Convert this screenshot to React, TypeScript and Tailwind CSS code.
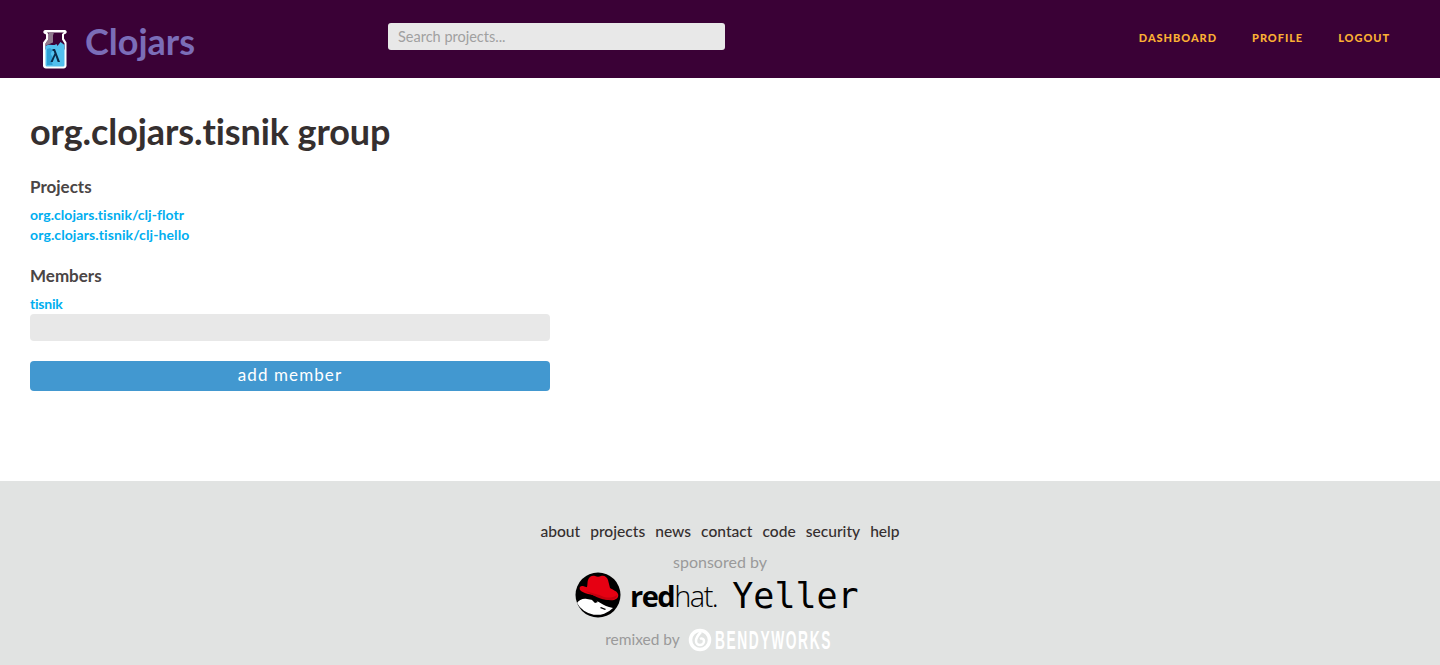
import React from 'react';

const Flask = () => (
  <svg width="24" height="39" viewBox="0 0 24 39" className="block">
    <path d="M2 0h20a2 2 0 0 1 1 3.500l-2 1v4l2.500 4v22.500a3 3 0 0 1-3 3.500H3a3 3 0 0 1-3-3.500V12.500l3-4v-4l-2-1A2 2 0 0 1 2 0z" fill="#fff" />
    <path d="M4 2.500h17l-2 1.500v5.500l2.500 4v6H2.500v-6l3-4V4z" fill="#3a0136" />
    <path d="M5 2.500h6l-1 3v7l-7 3v-3l3-4V4z" fill="#8f7a8e" />
    <path d="M2.500 16c3-2 6-1 9-1l2-1 1 2 3-4 4 3v20a1.500 1.500 0 0 1-1.500 1.500H4A1.500 1.500 0 0 1 2.500 35z" fill="#52c0ee" />
    <path d="M4 19c3-2 6 0 5 2s-2 3 0 5-1 8 1 9H4z" fill="#2f9fd6" />
    <path d="M9.500 19h2.500l5 13h-2.300l-2.300-6.500-2.700 6.500H7.500l4-8.500-.8-2.500H9.500z" fill="#0b2a4a" />
  </svg>
);

const RedHatLogo = () => (
  <svg width="46" height="46" viewBox="0 0 46 46" className="block">
    <circle cx="23" cy="23" r="22.500" fill="#000" />
    <path d="M2 31c2-3 6-5 10-4 4 1 7 1 10 2 4 2 8 5 12 6l4 1a22.500 22.500 0 0 1-36-5z" fill="#fff" />
    <path d="M17 28l3-1 3 3-3 1zM26 35l5 2-1 1-5-2z" fill="#000" />
    <path d="M13 8c1-4 5-5 7-4 2 1 4 1 6 0 3-1 6 1 7 4l2 8c3 2 7 3 8 6 1 3-1 5-4 6-5 1-10-1-15-3-7-3-16-3-19-7-1-3 0-4 3-4l3 1c2 1 1-4 2-7z" fill="#e60012" />
    <path d="M10 19c6 2 13 3 19 6 4 1 9 1 13-2 0 3-3 5-8 5-8 0-17-5-24-9z" fill="#c4000f" />
  </svg>
);

const footerLinks = ['about', 'projects', 'news', 'contact', 'code', 'security', 'help'];
const navLinks = ['DASHBOARD', 'PROFILE', 'LOGOUT'];

export default function App() {
  return (
    <div className="min-h-[665px] flex flex-col bg-white font-['Lato','Open_Sans',sans-serif]">
      <header className="h-[78px] bg-[#3a0136] flex items-start">
        <div className="w-[388px] pl-[43px] pt-[30px] flex items-start">
          <Flask />
          <span className="ml-[18px] mt-[-10px] text-[36px] leading-[42px] font-bold text-[#7b6db8]">Clojars</span>
        </div>
        <input
          placeholder="Search projects..."
          className="mt-[23px] w-[337px] h-[27px] px-[10px] pb-[1px] rounded-[3px] bg-[#e8e8e8] text-[14.500px] outline-none placeholder:text-[#a0a0a0]"
        />
        <nav className="ml-auto pr-[50px] pt-[31px] flex gap-[35px]">
          {navLinks.map((l) => (
            <a key={l} className="text-[11px] leading-[14px] font-black tracking-[0.950px] text-[#fbb034]">{l}</a>
          ))}
        </nav>
      </header>

      <main className="h-[403px] px-[30px] pt-[32px]">
        <h1 className="text-[36px] leading-[42px] font-bold tracking-[-0.1px] text-[#352f2f]">org.clojars.tisnik group</h1>
        <h2 className="mt-[25px] text-[17px] leading-[20px] font-bold text-[#4a4545]">Projects</h2>
        <ul className="mt-[8px]">
          <li className="text-[14px] leading-[20px] font-bold tracking-[0.03px] text-[#00aeef]">org.clojars.tisnik/clj-flotr</li>
          <li className="text-[14px] leading-[20px] font-bold tracking-[0.1px] text-[#00aeef]">org.clojars.tisnik/clj-hello</li>
        </ul>
        <h2 className="mt-[21px] text-[17px] leading-[20px] font-bold text-[#4a4545]">Members</h2>
        <div className="mt-[8px] text-[14px] leading-[20px] font-bold tracking-[-0.2px] text-[#00aeef]">tisnik</div>
        <input className="block w-[520px] h-[27px] rounded-[4px] bg-[#e8e8e8] outline-none" />
        <button className="block mt-[20px] w-[520px] h-[30px] pb-[2px] rounded-[4px] bg-[#4298d0] text-white text-[17px] tracking-[1.100px]">
          add member
        </button>
      </main>

      <footer className="h-[184px] bg-[#e1e3e2] flex flex-col items-center pt-[40px]">
        <div className="flex gap-[10px] text-[15.600px] leading-[20px] font-medium text-[#352f2f]">
          {footerLinks.map((l) => (
            <a key={l}>{l}</a>
          ))}
        </div>
        <div className="mt-[11px] text-[16px] leading-[20px] text-[#9a9a9a]">sponsored by</div>
        <div className="mt-0 w-[290px] flex items-center h-[46px]">
          <RedHatLogo />
          <span className="ml-[9px] pt-[2px] text-[29px] leading-[46px] tracking-[-1.500px] text-black font-['Open_Sans',sans-serif]">
            <b>red</b><span className="font-light">hat.</span>
          </span>
          <span className="ml-[15px] pt-[2px] text-[35px] leading-[46px] text-black font-['DejaVu_Sans_Mono',monospace]">Yeller</span>
        </div>
        <div className="mt-[5px] flex items-center h-[34px]">
          <span className="text-[15.500px] text-[#9a9a9a]">remixed by</span>
          <svg width="24" height="24" viewBox="0 0 24 24" className="ml-[8px]">
            <circle cx="12" cy="12" r="9.500" fill="none" stroke="#fff" strokeWidth="3.500" />
            <path d="M13 4c-3 3-5 6-5 9a4 4 0 0 0 8 0c0-2-2-3-4-2" fill="none" stroke="#fff" strokeWidth="2.500" />
          </svg>
          <div className="ml-[3px] w-[120px]">
            <span className="block w-max origin-left scale-x-[.53] text-[26px] leading-[30px] font-bold tracking-[3px] whitespace-nowrap text-white font-['Liberation_Sans',sans-serif]">BENDYWORKS</span>
          </div>
        </div>
      </footer>
    </div>
  );
}
